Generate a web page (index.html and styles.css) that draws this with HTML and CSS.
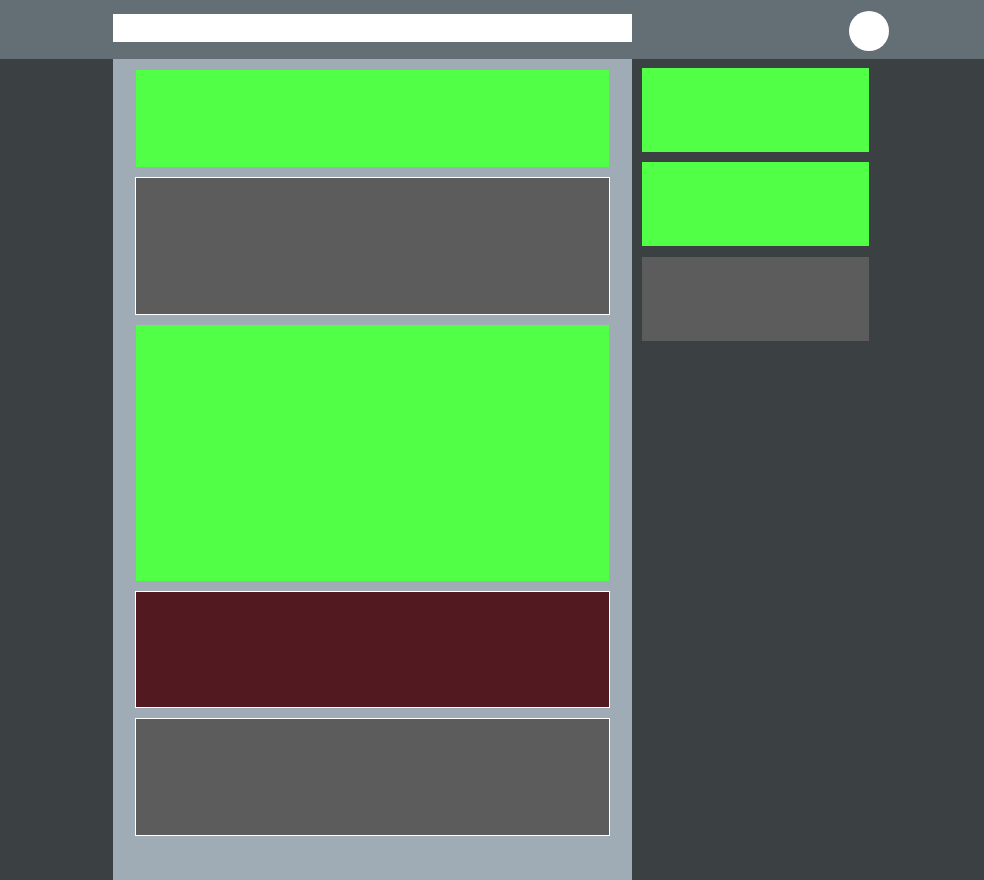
FILE: index.html
```html
<!DOCTYPE html>
<html lang="en">
<head>
<meta charset="utf-8">
<title>Layout</title>
<link rel="stylesheet" href="styles.css">
</head>
<body>
<header class="topbar">
  <div class="search"></div>
  <div class="avatar"></div>
</header>
<div class="layout">
  <main class="feed">
    <div class="block green b1"></div>
    <div class="block grey framed b2"></div>
    <div class="block green b3"></div>
    <div class="block red framed b4"></div>
    <div class="block grey framed b5"></div>
  </main>
  <aside class="side">
    <div class="card green"></div>
    <div class="card green"></div>
    <div class="card grey c3"></div>
  </aside>
</div>
</body>
</html>
```
FILE: styles.css
```css
html, body {
  margin: 0;
  padding: 0;
  background: #3b4142;
  font-family: "Liberation Sans", Arial, sans-serif;
  height: 880px;
  overflow: hidden;
}
.topbar {
  height: 59px;
  background: #646e75;
  display: flex;
  align-items: flex-start;
  padding-left: 113px;
}
.search {
  width: 519px;
  height: 28px;
  margin-top: 14px;
  background: #ffffff;
}
.avatar {
  width: 40px;
  height: 40px;
  border-radius: 50%;
  background: #ffffff;
  margin-top: 11px;
  margin-left: 217px;
}
.layout {
  display: flex;
  align-items: flex-start;
  padding-left: 113px;
}
.feed {
  width: 519px;
  box-sizing: border-box;
  height: 821px;
  background: #9facb5;
  padding: 11px 23px 0 23px;
  display: flex;
  flex-direction: column;
}
.block { width: 473px; flex-shrink: 0; }
.green { background: #52ff47; }
.grey { background: #5c5c5c; }
.red { background: #521920; }
.framed { outline: 1px solid #ffffff; }
.b1 { height: 97px; }
.b2 { height: 136px; margin-top: 11px; }
.b3 { height: 256px; margin-top: 11px; }
.b4 { height: 115px; margin-top: 11px; }
.b5 { height: 116px; margin-top: 12px; }
.side {
  margin-left: 10px;
  margin-top: 9px;
  display: flex;
  flex-direction: column;
  gap: 10px;
}
.card {
  width: 227px;
  height: 84px;
}
.c3 { margin-top: 1px; }
```
